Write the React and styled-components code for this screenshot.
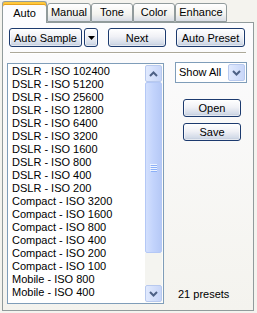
import React from "react";
import styled, { createGlobalStyle } from "styled-components";

const GlobalStyle = createGlobalStyle`
  html, body {
    margin: 0;
    padding: 0;
    background: #f4f3ee;
    font-family: "Liberation Sans", Arial, sans-serif;
    font-size: 11px;
    color: #000;
  }
`;

// only the rows that fit in the list box are shown (18 of 21)
const presets = [
  "DSLR - ISO 102400",
  "DSLR - ISO 51200",
  "DSLR - ISO 25600",
  "DSLR - ISO 12800",
  "DSLR - ISO 6400",
  "DSLR - ISO 3200",
  "DSLR - ISO 1600",
  "DSLR - ISO 800",
  "DSLR - ISO 400",
  "DSLR - ISO 200",
  "Compact - ISO 3200",
  "Compact - ISO 1600",
  "Compact - ISO 800",
  "Compact - ISO 400",
  "Compact - ISO 200",
  "Compact - ISO 100",
  "Mobile - ISO 800",
  "Mobile - ISO 400",
];

const tabs = [
  { label: "Auto", width: 45 },
  { label: "Manual", width: 44 },
  { label: "Tone", width: 42 },
  { label: "Color", width: 42 },
  { label: "Enhance", width: 52 },
];

const Window = styled.div`
  width: 257px;
  height: 313px;
  padding: 1px 3px 2px 2px;
  box-sizing: border-box;
  display: flex;
  flex-direction: column;
`;

const TabBar = styled.div`
  display: flex;
  align-items: flex-end;
  height: 22px;
  position: relative;
  z-index: 2;
`;

const Tab = styled.div`
  width: ${p => p.$width}px;
  height: ${p => (p.$active ? 22 : 19)}px;
  box-sizing: border-box;
  border: 1px solid #919b9c;
  border-bottom: ${p => (p.$active ? "none" : "1px solid #919b9c")};
  border-radius: 3px 3px 0 0;
  background: ${p =>
    p.$active
      ? "#fcfcfe"
      : "linear-gradient(#ffffff, #f3f3ef 60%, #d8dde6)"};
  box-shadow: ${p => (p.$active ? "inset 0 2px 0 #ffc83c, inset 0 3px 0 #e6a01e" : "none")};
  display: flex;
  align-items: center;
  justify-content: center;
  padding-top: ${p => (p.$active ? 1 : 0)}px;
  margin-bottom: ${p => (p.$active ? -1 : 0)}px;
  font-size: 11px;
  line-height: 13px;
`;

const Panel = styled.div`
  flex: 1;
  border: 1px solid #919b9c;
  background: linear-gradient(#fcfcfe, #f4f3ee);
  padding: 5px 6px 6px 4px;
  display: flex;
  flex-direction: column;
`;

const Toolbar = styled.div`
  display: flex;
  align-items: center;
  height: 19px;
  padding-left: 2px;
`;

const Button = styled.button`
  height: ${p => p.$h || 19}px;
  width: ${p => p.$w}px;
  margin-left: ${p => p.$gap || 0}px;
  margin-top: ${p => p.$top || 0}px;
  padding: 0;
  box-sizing: border-box;
  border: 1px solid #1c3a6e;
  border-radius: 3px;
  background: linear-gradient(#ffffff, #f0f1f6 45%, #d3dbe8 85%, #b9c4d6);
  box-shadow: inset 0 0 0 1px rgba(255, 255, 255, 0.6);
  font-family: "Liberation Sans", Arial, sans-serif;
  font-size: 11px;
  color: #000;
  display: flex;
  align-items: center;
  justify-content: center;
`;

const Separator = styled.div`
  height: 0;
  border-top: 1px solid #aca899;
  border-bottom: 1px solid #ffffff;
  margin: 5px 1px 9px 3px;
`;

const Body = styled.div`
  display: flex;
  flex: 1;
`;

const ListBox = styled.div`
  width: 158px;
  height: 241px;
  box-sizing: border-box;
  border: 1px solid #7f9db9;
  background: #fff;
  display: flex;
`;

const Items = styled.div`
  flex: 1;
  overflow: hidden;
  padding: 1px 0 0 4px;
`;

const Item = styled.div`
  height: 13px;
  line-height: 13px;
  white-space: nowrap;
`;

const ScrollBar = styled.div`
  width: 17px;
  display: flex;
  flex-direction: column;
  background: #fdfdfa;
  padding: 1px 1px 1px 0;
`;

const ArrowBtn = styled.div`
  height: 17px;
  box-sizing: border-box;
  border: 1px solid #b8c9ee;
  border-radius: 2px;
  background: linear-gradient(90deg, #e1eafe, #c8d6f8);
  display: flex;
  align-items: center;
  justify-content: center;
`;

const Thumb = styled.div`
  height: 171px;
  box-sizing: border-box;
  border: 1px solid #b4c8f6;
  border-radius: 2px;
  background: linear-gradient(90deg, #d3e0fd, #c2d3fc 50%, #b6c9f6);
  display: flex;
  align-items: center;
  justify-content: center;
`;

const Track = styled.div`
  flex: 1;
  background: #f4f4f0;
`;

const Side = styled.div`
  flex: 1;
  display: flex;
  flex-direction: column;
  align-items: flex-start;
  padding-left: 11px;
`;

const Select = styled.div`
  width: 72px;
  height: 21px;
  box-sizing: border-box;
  border: 1px solid #7f9db9;
  background: #fff;
  display: flex;
  margin-top: -1px;
`;

const SelectText = styled.div`
  flex: 1;
  padding-left: 3px;
  line-height: 19px;
`;

const SelectArrow = styled(ArrowBtn)`
  width: 17px;
  height: 17px;
  margin: 1px;
`;

const Count = styled.div`
  margin-top: auto;
  margin-bottom: 3px;
  margin-left: 3px;
  line-height: 13px;
`;

const Chevron = ({ up }) => (
  <svg width="9" height="6" viewBox="0 0 9 6">
    <path
      d={up ? "M1 5 L4.5 1.5 L8 5" : "M1 1 L4.5 4.5 L8 1"}
      fill="none"
      stroke="#4d6185"
      strokeWidth="2"
    />
  </svg>
);

const Grip = () => (
  <svg width="7" height="8" viewBox="0 0 7 8">
    {[0, 2, 4, 6].map(y => (
      <g key={y}>
        <rect x="0" y={y} width="7" height="1" fill="#eef4fe" />
        <rect x="1" y={y + 1} width="7" height="1" fill="#8cb0f8" />
      </g>
    ))}
  </svg>
);

const DropTriangle = () => (
  <svg width="7" height="4" viewBox="0 0 7 4">
    <path d="M0 0 H7 L3.5 4 Z" fill="#000" />
  </svg>
);

export default function App() {
  return (
    <>
      <GlobalStyle />
      <Window>
        <TabBar>
          {tabs.map((t, i) => (
            <Tab key={t.label} $width={t.width} $active={i === 0}>
              {t.label}
            </Tab>
          ))}
        </TabBar>
        <Panel>
          <Toolbar>
            <Button $w={73}>Auto Sample</Button>
            <Button $w={14} $gap={2}>
              <DropTriangle />
            </Button>
            <Button $w={58} $gap={10}>Next</Button>
            <Button $w={69} $gap={10}>Auto Preset</Button>
          </Toolbar>
          <Separator />
          <Body>
            <ListBox>
              <Items>
                {presets.map(p => (
                  <Item key={p}>{p}</Item>
                ))}
              </Items>
              <ScrollBar>
                <ArrowBtn>
                  <Chevron up />
                </ArrowBtn>
                <Thumb>
                  <Grip />
                </Thumb>
                <Track />
                <ArrowBtn>
                  <Chevron />
                </ArrowBtn>
              </ScrollBar>
            </ListBox>
            <Side>
              <Select>
                <SelectText>Show All</SelectText>
                <SelectArrow>
                  <Chevron />
                </SelectArrow>
              </Select>
              <Button $w={58} $h={18} $gap={8} $top={16}>Open</Button>
              <Button $w={58} $h={18} $gap={8} $top={6}>Save</Button>
              <Count>21 presets</Count>
            </Side>
          </Body>
        </Panel>
      </Window>
    </>
  );
}
